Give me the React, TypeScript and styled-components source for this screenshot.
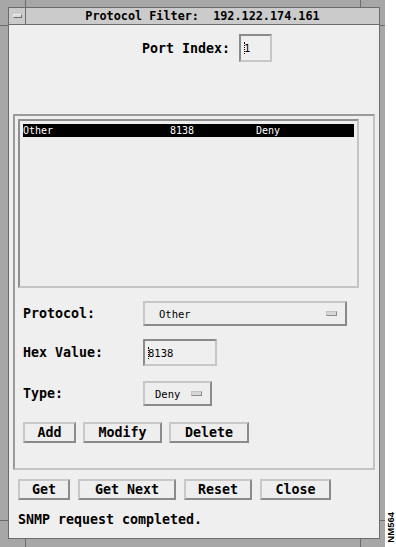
import React from 'react';
import styled, { createGlobalStyle } from 'styled-components';

const GlobalStyle = createGlobalStyle`
  html, body {
    margin: 0;
    padding: 0;
    background: #ffffff;
  }
  * {
    box-sizing: border-box;
  }
`;

const App: React.FC = () => {
  return (
    <Page>
      <GlobalStyle />
      <Window>
        <Tick style={{ left: 25, top: 0, width: 1, height: 7 }} />
        <Tick style={{ left: 360, top: 0, width: 1, height: 7 }} />
        <Tick style={{ left: 0, top: 25, width: 8, height: 1 }} />
        <Tick style={{ left: 380, top: 25, width: 5, height: 1 }} />
        <Tick style={{ left: 0, top: 520, width: 8, height: 1 }} />
        <Tick style={{ left: 380, top: 520, width: 5, height: 1 }} />
        <Tick style={{ left: 25, top: 539, width: 1, height: 8 }} />
        <Tick style={{ left: 360, top: 539, width: 1, height: 8 }} />
        <Frame>
          <TitleBar>
            <MenuBox>
              <MenuGlyph />
            </MenuBox>
            <Title>Protocol Filter:&nbsp; 192.122.174.161</Title>
          </TitleBar>
          <Body>
            <PortRow>
              <Label>Port Index:</Label>
              <TextField $width={33} $height={28}>
                <Caret />1
              </TextField>
            </PortRow>

            <Group>
              <ListBox>
                <ListRow $selected>
                  <Cell $width={147}>Other</Cell>
                  <Cell $width={86}>8138</Cell>
                  <Cell>Deny</Cell>
                </ListRow>
              </ListBox>

              <FormRow $top={13} $height={25}>
                <Label $width={120}>Protocol:</Label>
                <OptionMenu $width={204}>
                  <OptionText>Other</OptionText>
                  <Indicator />
                </OptionMenu>
              </FormRow>

              <FormRow $top={13} $height={27}>
                <Label $width={120}>Hex Value:</Label>
                <TextField $width={74} $height={27}>
                  <Caret />8138
                </TextField>
              </FormRow>

              <FormRow $top={15} $height={25}>
                <Label $width={120}>Type:</Label>
                <OptionMenu $width={69}>
                  <OptionText $pad={10}>Deny</OptionText>
                  <Indicator />
                </OptionMenu>
              </FormRow>

              <ButtonRow $top={16} $left={5} $gap={7}>
                <Button $width={53}>Add</Button>
                <Button $width={79}>Modify</Button>
                <Button $width={80}>Delete</Button>
              </ButtonRow>
            </Group>

            <ButtonRow $top={9} $left={9} $gap={8}>
              <Button $width={52}>Get</Button>
              <Button $width={98}>Get Next</Button>
              <Button $width={68}>Reset</Button>
              <Button $width={71}>Close</Button>
            </ButtonRow>

            <Status>SNMP request completed.</Status>
          </Body>
        </Frame>
      </Window>
      <Strip>
        <StripTag>NM564</StripTag>
      </Strip>
    </Page>
  );
};

export default App;

// Styled Components
const Page = styled.div`
  width: 396px;
  height: 547px;
  display: flex;
  overflow: hidden;
`;

const Window = styled.div`
  position: relative;
  width: 385px;
  height: 547px;
  background: #a7a7a7;
  padding: 7px 5px 8px 8px;
  display: flex;
`;

const Tick = styled.div`
  position: absolute;
  background: #6c6c6c;
`;

const Frame = styled.div`
  flex: 1;
  display: flex;
  flex-direction: column;
  border: 1px solid #6c6c6c;
`;

const TitleBar = styled.div`
  height: 17px;
  display: flex;
  background: #cbcbcb;
  border-bottom: 1px solid #6c6c6c;
`;

const MenuBox = styled.div`
  width: 17px;
  border-right: 1px solid #6c6c6c;
  padding: 6px 0 0 4px;
`;

const MenuGlyph = styled.div`
  width: 9px;
  height: 4px;
  background: #d9d9d9;
  border: 1px solid #6c6c6c;
  border-top-color: #eeeeee;
  border-left-color: #eeeeee;
`;

const Title = styled.div`
  flex: 1;
  text-align: center;
  font-family: 'DejaVu Sans Mono', monospace;
  font-weight: bold;
  font-size: 11.8px;
  line-height: 16px;
  color: #000;
  white-space: pre;
`;

const Body = styled.div`
  flex: 1;
  background: #efefef;
  padding-top: 9px;
  display: flex;
  flex-direction: column;
`;

const PortRow = styled.div`
  display: flex;
  align-items: center;
  gap: 9px;
  margin-left: 133px;
`;

const Label = styled.div<{ $width?: number }>`
  width: ${(p) => (p.$width ? `${p.$width}px` : 'auto')};
  flex-shrink: 0;
  font-family: 'DejaVu Sans Mono', monospace;
  font-weight: bold;
  font-size: 13.3px;
  color: #000;
  white-space: pre;
`;

const TextField = styled.div<{ $width: number; $height: number }>`
  width: ${(p) => p.$width}px;
  height: ${(p) => p.$height}px;
  display: flex;
  align-items: center;
  padding-left: 3px;
  border: 2px solid #c6c6c6;
  border-top-color: #8a8a8a;
  border-left-color: #8a8a8a;
  background: #efefef;
  font-family: 'DejaVu Sans Mono', monospace;
  font-size: 10.5px;
  color: #000;
`;

const Caret = styled.span`
  display: inline-block;
  width: 1px;
  height: 12px;
  margin-right: -1px;
  border-left: 1px dotted #000;
`;

const Group = styled.div`
  margin: 52px 0 0 4px;
  width: 362px;
  border: 2px solid #c2c2c2;
  border-top-color: #9a9a9a;
  border-left-color: #9a9a9a;
  padding: 3px 0 25px 3px;
  display: flex;
  flex-direction: column;
`;

const ListBox = styled.div`
  width: 341px;
  height: 169px;
  border: 2px solid #c4c4c4;
  border-top-color: #8e8e8e;
  border-left-color: #8e8e8e;
  background: #eeeeee;
  padding: 3px;
`;

const ListRow = styled.div<{ $selected?: boolean }>`
  height: 13px;
  display: flex;
  background: ${(p) => (p.$selected ? '#000' : 'transparent')};
  color: ${(p) => (p.$selected ? '#fff' : '#000')};
  font-family: 'DejaVu Sans Mono', monospace;
  font-size: 10px;
  line-height: 13px;
`;

const Cell = styled.span<{ $width?: number }>`
  width: ${(p) => (p.$width ? `${p.$width}px` : 'auto')};
  flex-shrink: 0;
`;

const FormRow = styled.div<{ $top: number; $height: number }>`
  margin-top: ${(p) => p.$top}px;
  height: ${(p) => p.$height}px;
  padding-left: 5px;
  display: flex;
  align-items: center;
`;

const OptionMenu = styled.div<{ $width: number }>`
  width: ${(p) => p.$width}px;
  height: 25px;
  display: flex;
  align-items: center;
  justify-content: space-between;
  padding-right: 8px;
  border: 2px solid #8a8a8a;
  border-top-color: #c6c6c6;
  border-left-color: #c6c6c6;
  background: #eeeeee;
`;

const OptionText = styled.span<{ $pad?: number }>`
  padding-left: ${(p) => p.$pad ?? 14}px;
  font-family: 'DejaVu Sans Mono', monospace;
  font-size: 10.5px;
  color: #000;
`;

const Indicator = styled.span`
  width: 11px;
  height: 5px;
  background: #d6d6d6;
  border: 1px solid #8a8a8a;
  border-top-color: #c4c4c4;
  border-left-color: #c4c4c4;
`;

const ButtonRow = styled.div<{ $top: number; $left: number; $gap: number }>`
  display: flex;
  gap: ${(p) => p.$gap}px;
  margin-top: ${(p) => p.$top}px;
  padding-left: ${(p) => p.$left}px;
`;

const Button = styled.div<{ $width: number }>`
  width: ${(p) => p.$width}px;
  height: 21px;
  display: flex;
  align-items: center;
  justify-content: center;
  border: 2px solid #8a8a8a;
  border-top-color: #c8c8c8;
  border-left-color: #c8c8c8;
  background: #eeeeee;
  font-family: 'DejaVu Sans Mono', monospace;
  font-weight: bold;
  font-size: 13.3px;
  color: #000;
  white-space: pre;
`;

const Status = styled.div`
  margin: 12px 0 0 9px;
  font-family: 'DejaVu Sans Mono', monospace;
  font-weight: bold;
  font-size: 13.3px;
  line-height: 16px;
  color: #000;
`;

const Strip = styled.div`
  width: 11px;
  height: 547px;
  background: #ffffff;
  display: flex;
  flex-direction: column;
  justify-content: flex-end;
  align-items: center;
  padding-bottom: 4px;
`;

const StripTag = styled.span`
  writing-mode: vertical-rl;
  transform: rotate(180deg);
  font-family: 'Liberation Sans', Arial, sans-serif;
  font-weight: bold;
  font-size: 9.5px;
  line-height: 10px;
  color: #000;
`;
